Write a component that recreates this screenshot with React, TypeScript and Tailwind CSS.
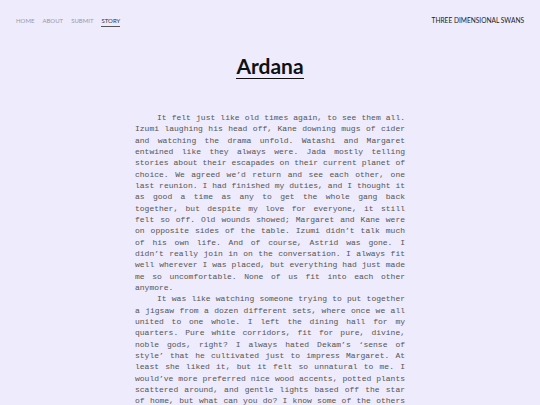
const NAV = ['Home', 'About', 'Submit', 'Story'];

const PARAGRAPHS = [
  'It felt just like old times again, to see them all. Izumi laughing his head off, Kane downing mugs of cider and watching the drama unfold. Watashi and Margaret entwined like they always were. Jada mostly telling stories about their escapades on their current planet of choice. We agreed we’d return and see each other, one last reunion. I had finished my duties, and I thought it as good a time as any to get the whole gang back together, but despite my love for everyone, it still felt so off. Old wounds showed; Margaret and Kane were on opposite sides of the table. Izumi didn’t talk much of his own life. And of course, Astrid was gone. I didn’t really join in on the conversation. I always fit well wherever I was placed, but everything had just made me so uncomfortable. None of us fit into each other anymore.',
  'It was like watching someone trying to put together a jigsaw from a dozen different sets, where once we all united to one whole. I left the dining hall for my quarters. Pure white corridors, fit for pure, divine, noble gods, right? I always hated Dekam’s ‘sense of style’ that he cultivated just to impress Margaret. At least she liked it, but it felt so unnatural to me. I would’ve more preferred nice wood accents, potted plants scattered around, and gentle lights based off the star of home, but what can you do? I know some of the others tried to make it feel like home, but it never really did.',
];

export default function App() {
  return (
    <div className="h-[405px] overflow-hidden bg-[#edebfc] font-['Lato',sans-serif]">
      <header className="flex items-start justify-between px-4 pt-[16px]">
        <nav className="flex gap-[8px] text-[6px] uppercase">
          {NAV.map((item) => (
            <a
              key={item}
              className={
                item === 'Story'
                  ? 'border-b border-[#555] pb-[1px] text-[#333]'
                  : 'text-[#9a98a8]'
              }
            >
              {item}
            </a>
          ))}
        </nav>
        <p className="text-[6.6px] uppercase text-[#222]">Three Dimensional Swans</p>
      </header>

      <main className="mx-auto w-[270px]">
        <h1 className="mt-[28px] text-center text-[21px] font-bold leading-none text-[#111]">
          <span className="border-b-[1.5px] border-[#111]">Ardana</span>
        </h1>
        <div className="mt-[36px] font-['Liberation_Mono',monospace] text-[8px] leading-[11.33px] text-[#555]">
          {PARAGRAPHS.map((text, i) => (
            <p key={i} className="indent-[22px] text-justify">
              {text}
            </p>
          ))}
        </div>
      </main>
    </div>
  );
}
